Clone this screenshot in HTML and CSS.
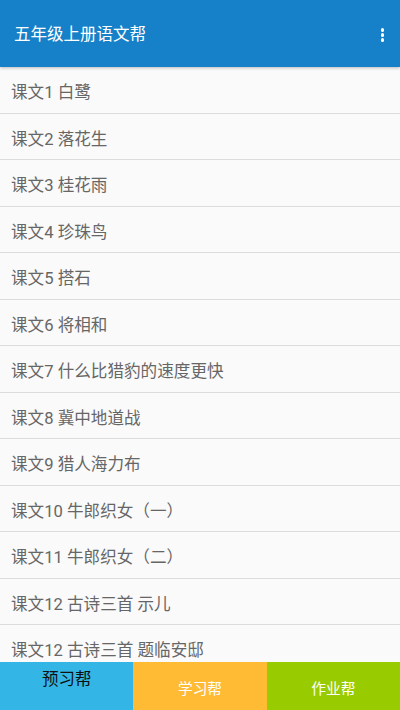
FILE: index.html
```html
<!DOCTYPE html>
<html lang="zh-CN">
<head>
<meta charset="utf-8">
<title>五年级上册语文帮</title>
<link rel="stylesheet" href="styles.css">
</head>
<body>
<div class="app">
  <header class="appbar">
    <div class="toolbar">
      <span class="title">五年级上册语文帮</span>
      <span class="menu" aria-label="更多"><i></i><i></i><i></i></span>
    </div>
  </header>
  <ul class="list">
    <li class="row">课文1 白鹭</li>
    <li class="row">课文2 落花生</li>
    <li class="row">课文3 桂花雨</li>
    <li class="row">课文4 珍珠鸟</li>
    <li class="row">课文5 搭石</li>
    <li class="row">课文6 将相和</li>
    <li class="row">课文7 什么比猎豹的速度更快</li>
    <li class="row">课文8 冀中地道战</li>
    <li class="row">课文9 猎人海力布</li>
    <li class="row">课文10 牛郎织女（一）</li>
    <li class="row">课文11 牛郎织女（二）</li>
    <li class="row">课文12 古诗三首 示儿</li>
    <li class="row">课文12 古诗三首 题临安邸</li>
  </ul>
  <nav class="tabs">
    <div class="tab tab-preview">预习帮</div>
    <div class="tab tab-study">学习帮</div>
    <div class="tab tab-work">作业帮</div>
  </nav>
</div>
</body>
</html>
```
FILE: styles.css
```css
html, body {
  margin: 0;
  padding: 0;
  background: #fafafa;
}
.app {
  width: 400px;
  height: 710px;
  display: flex;
  flex-direction: column;
  overflow: hidden;
  font-family: Roboto, "Noto Sans CJK SC", sans-serif;
}
.appbar {
  height: 67px;
  flex: none;
  background: #1681c8;
  box-shadow: 0 1px 3px rgba(0,0,0,0.25);
  position: relative;
  z-index: 1;
  display: flex;
  flex-direction: column;
  justify-content: flex-end;
}
.toolbar {
  height: 43px;
  display: flex;
  align-items: flex-start;
  justify-content: space-between;
  padding: 0 16px 0 14px;
}
.title {
  color: #ffffff;
  font-size: 16.5px;
  line-height: 22px;
}
.menu {
  display: flex;
  flex-direction: column;
  gap: 1.5px;
  padding-top: 4px;
}
.menu i {
  display: block;
  width: 3.5px;
  height: 3.5px;
  border-radius: 50%;
  background: #ffffff;
}
.list {
  flex: 1;
  min-height: 0;
  margin: 0;
  padding: 0;
  list-style: none;
  overflow: hidden;
}
.row {
  box-sizing: border-box;
  height: 46.5px;
  border-bottom: 1px solid #dcdcdc;
  padding: 3px 0 0 11px;
  display: flex;
  align-items: center;
  color: #666666;
  font-size: 16.6px;
  white-space: nowrap;
}
.tabs {
  height: 48px;
  flex: none;
  display: grid;
  grid-template-columns: 1fr 1fr 1fr;
}
.tab {
  display: flex;
  justify-content: center;
  color: #ffffff;
  font-size: 14.7px;
  align-items: center;
  padding-top: 2px;
}
.tab-preview {
  background: #33b5e5;
  color: #111111;
  font-size: 16.5px;
  align-items: flex-start;
  padding-top: 4px;
}
.tab-study {
  background: #ffbb33;
}
.tab-work {
  background: #99cc00;
}
```
